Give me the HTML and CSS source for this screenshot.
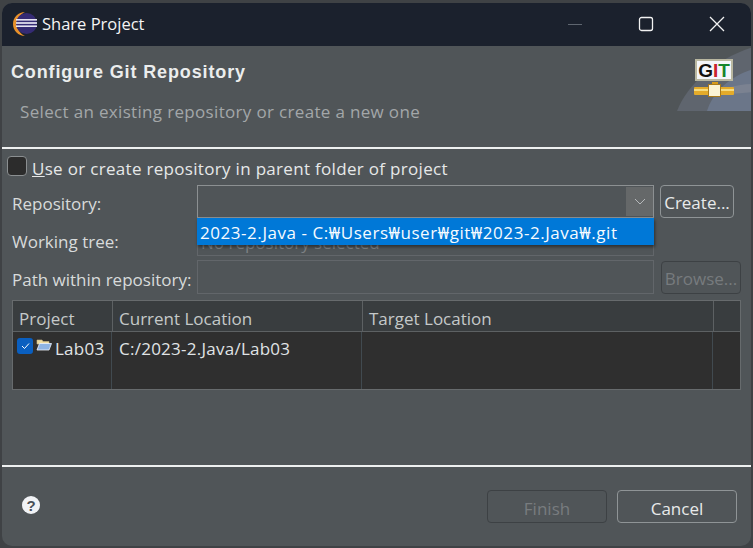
FILE: index.html
```html
<!DOCTYPE html>
<html lang="en">
<head>
<meta charset="utf-8">
<title>Share Project</title>
<link rel="stylesheet" href="styles.css">
</head>
<body>
<div class="window">
  <div class="titlebar">
    <svg class="app-icon" width="26" height="26" viewBox="0 0 26 26">
      <path d="M14 1C7.400 1 2 6.400 2 13C2 19.600 7.400 25 14 25C10 23 6 19 6 13C6 7 10 3 14 1Z" fill="#e8912a"/>
      <circle cx="15.500" cy="12.500" r="10.500" fill="#352b74"/>
      <rect x="5" y="8" width="21" height="1.600" fill="#e6e4f2"/>
      <rect x="5" y="11.200" width="21" height="1.600" fill="#f2f1f8"/>
      <rect x="5" y="14.400" width="21" height="1.600" fill="#e6e4f2"/>
    </svg>
    <span class="title">Share Project</span>
    <div class="controls">
      <svg width="16" height="16" viewBox="0 0 16 16"><path d="M1 8.500H15" stroke="#5f6670" stroke-width="1"/></svg>
      <svg width="16" height="16" viewBox="0 0 16 16"><rect x="1.500" y="1.500" width="13" height="13" rx="2" fill="none" stroke="#f2f2f2" stroke-width="1.300"/></svg>
      <svg width="16" height="16" viewBox="0 0 16 16"><path d="M1 1L15 15M15 1L1 15" stroke="#f2f2f2" stroke-width="1.300"/></svg>
    </div>
  </div>

  <header class="banner">
    <div class="banner-text">
      <h1>Configure Git Repository</h1>
      <p>Select an existing repository or create a new one</p>
    </div>
    <div class="banner-art">
      <svg width="76" height="65" viewBox="0 0 76 65">
        <path d="M0 65C10 38 40 12 76 1V65Z" fill="#5f656e"/>
        <path d="M30 65C36 45 54 30 76 23V65Z" fill="#6b7689"/>
        <path d="M30 50C45 42 62 38 76 38V46C60 48 45 48 30 50Z" fill="#858b96" opacity=".6"/>
        <rect x="19" y="14" width="36" height="20" fill="#f4f6fa" stroke="#b9b7a0" stroke-width="2"/>
        <rect x="17" y="41" width="40" height="8" rx="1" fill="#e4ab2a"/>
        <rect x="17" y="43" width="40" height="2" fill="#f6dc80"/>
        <rect x="35" y="36" width="6" height="4" fill="#d79b1c"/>
        <rect x="31.500" y="38.500" width="12" height="12" fill="#fbf3d4" stroke="#a8791a"/>
      </svg>
      <span class="git-mark"><span class="g">G</span><span class="i">I</span><span class="t">T</span></span>
    </div>
  </header>

  <main class="content">
    <label class="parent-check">
      <span class="checkbox"></span>
      <span class="check-text"><u>U</u>se or create repository in parent folder of project</span>
    </label>

    <div class="form">
      <span class="label">Repository:</span>
      <div class="combo">
        <span class="combo-arrow">
          <svg width="12" height="7" viewBox="0 0 12 7"><path d="M1 1L6 6L11 1" fill="none" stroke="#b5b8ba" stroke-width="1"/></svg>
        </span>
        <div class="dropdown">2023-2.Java - C:₩Users₩user₩git₩2023-2.Java₩.git</div>
      </div>
      <button class="btn btn-create">Create...</button>

      <span class="label">Working tree:</span>
      <div class="field field-tree"><span class="hidden-text">No repository selected</span></div>
      <span></span>

      <span class="label">Path within repository:</span>
      <div class="field field-path"></div>
      <button class="btn btn-browse" disabled>Browse...</button>
    </div>

    <div class="table">
      <div class="row head">
        <div class="cell">Project</div>
        <div class="cell">Current Location</div>
        <div class="cell">Target Location</div>
        <div class="cell"></div>
      </div>
      <div class="row body-row">
        <div class="cell project">
          <span class="tick">
            <svg width="9" height="8" viewBox="0 0 9 8"><path d="M1 4L3.500 6.500L8 1.500" fill="none" stroke="#fff" stroke-width="1"/></svg>
          </span>
          <svg class="folder" width="16" height="13" viewBox="0 0 16 13">
            <path d="M1 2H6L7 3.500H13V6H1Z" fill="#f0dca0" stroke="#c9b98a" stroke-width=".6"/>
            <path d="M1 12L3.500 5.500H15.500L13 12Z" fill="#8fb4e4" stroke="#eef3fb" stroke-width=".8"/>
          </svg>
          <span>Lab03</span>
        </div>
        <div class="cell">C:/2023-2.Java/Lab03</div>
        <div class="cell"></div>
        <div class="cell"></div>
      </div>
    </div>
  </main>

  <footer class="footer">
    <div class="actions">
      <svg class="help" width="20" height="20" viewBox="0 0 20 20">
        <circle cx="10" cy="10" r="9" fill="#f1f3f6"/>
        <text x="10" y="15.500" class="help-mark">?</text>
      </svg>
      <button class="btn btn-finish" disabled>Finish</button>
      <button class="btn btn-cancel">Cancel</button>
    </div>
  </footer>
</div>
</body>
</html>
```

FILE: styles.css
```css
* { box-sizing: border-box; }
html, body { margin: 0; padding: 0; }
body {
  width: 753px;
  height: 548px;
  overflow: hidden;
  background: #3f4245;
  font-family: "Open Sans", "Noto Sans", "Noto Sans CJK KR", sans-serif;
  font-size: 17px;
  color: #e6e8e8;
}
.window {
  margin: 3px 0 0 2px;
  width: 749px;
  height: 543px;
  background: #505558;
  border-radius: 10px;
  overflow: hidden;
  display: flex;
  flex-direction: column;
}
.titlebar {
  height: 43px;
  flex: none;
  background: #1b212d;
  display: flex;
  align-items: center;
  padding: 0 0 2px 9px;
}
.app-icon { margin-right: 5px; flex: none; }
.title { font-size: 16.500px; color: #f4f4f4; }
.controls {
  margin-left: auto;
  display: flex;
  gap: 55px;
  padding-right: 26px;
  align-items: center;
}
.banner {
  height: 103px;
  flex: none;
  display: flex;
  justify-content: space-between;
  align-items: flex-start;
  border-bottom: 2px solid #eef0f0;
}
.banner-text { padding: 14px 0 0 9px; }
.banner h1 {
  margin: 0;
  font-family: "Liberation Sans", sans-serif;
  font-size: 18px;
  font-weight: 700;
  line-height: 24px;
  letter-spacing: .87px;
  color: #ebeded;
}
.banner p {
  margin: 17px 0 0 9px;
  line-height: 22px;
  letter-spacing: .33px;
  color: #a3a7a9;
}
.banner-art { position: relative; width: 76px; height: 65px; flex: none; margin-right: -2px; }
.banner-art svg { display: block; }
.git-mark {
  position: absolute;
  left: 18px;
  top: 13px;
  width: 38px;
  text-align: center;
  font-family: "Liberation Sans", sans-serif;
  font-weight: 700;
  font-size: 19px;
  line-height: 24px;
  color: #111;
}
.git-mark .i { color: #c8232c; }
.git-mark .t { color: #14852c; }
.content {
  flex: 1;
  padding: 7px 10px 0 5px;
  position: relative;
}
.parent-check {
  display: flex;
  align-items: center;
  gap: 5px;
  height: 22px;
  letter-spacing: .31px;
}
.check-text { padding-top: 2px; }
.checkbox {
  width: 20px;
  height: 20px;
  flex: none;
  margin-top: -2px;
  background: #2c2c2c;
  border: 1px solid #8b8f91;
  border-radius: 4px;
}
.form {
  margin-top: 6px;
  padding-left: 5px;
  display: grid;
  grid-template-columns: 185px 457px auto;
  grid-template-rows: 34px 34px 34px;
  row-gap: 4px;
  align-items: center;
}
.label { color: #d8dbdb; padding-top: 5px; }
.combo {
  position: relative;
  height: 33px;
  background: #505558;
  border: 1px solid #8c9092;
}
.combo-arrow {
  position: absolute;
  right: 0;
  top: 1px;
  bottom: 1px;
  width: 27px;
  background: #656869;
  display: flex;
  align-items: center;
  justify-content: center;
}
.dropdown {
  position: absolute;
  left: -1px;
  right: -1px;
  top: 32px;
  height: 27px;
  padding-left: 3px;
  line-height: 30px;
  background: #0078d7;
  color: #f6fbff;
  letter-spacing: .55px;
  white-space: nowrap;
  box-shadow: 1px 2px 3px rgba(0,0,0,.45);
  z-index: 2;
}
.field {
  height: 33px;
  border: 1px solid #62666a;
  background: #505558;
  overflow: hidden;
}
.field-path { height: 34px; }
.hidden-text { display: block; padding-left: 3px; color: #7d8184; line-height: 37px; white-space: nowrap; }
.btn {
  font: inherit;
  height: 33px;
  background: #505558;
  border: 1px solid #8f9496;
  border-radius: 4px;
  color: #e8eaea;
  padding: 3px 0 0;
}
.btn-create { width: 74px; margin-left: 6px; }
.btn-browse { width: 80px; margin-left: 7px; color: #777b7e; border-color: #3d4144; }
.table {
  margin-top: 6px;
  margin-left: 5px;
  width: 729px;
  height: 90px;
  border: 1px solid #676b6d;
  background: #2f2f2f;
  display: flex;
  flex-direction: column;
}
.row {
  display: grid;
}
.head {
  grid-template-columns: 100px 250px 351px 1fr;
  height: 31px;
  background: #393d3f;
  border-bottom: 1px solid #5d6163;
  color: #c5c9c9;
}
.head .cell {
  padding: 5px 0 0 6px;
  line-height: 25px;
  border-right: 1px solid #5d6163;
}
.head .cell:last-child { border-right: 0; }
.body-row {
  grid-template-columns: 99px 250px 351px 1fr;
  flex: 1;
  line-height: 34px;
  color: #e0e4e6;
  letter-spacing: .25px;
}
.body-row .cell { padding-left: 7px; border-right: 1px solid #414a50; }
.body-row .cell:last-child { border-right: 0; }
.body-row .cell.project {
  padding-left: 4px;
  display: flex;
  align-items: flex-start;
  gap: 3px;
}
.tick {
  width: 16px;
  height: 16px;
  flex: none;
  margin-top: 6px;
  border-radius: 3px;
  background: #0a5fc0;
  display: flex;
  align-items: center;
  justify-content: center;
}
.folder { flex: none; margin-top: 6px; }
.footer { height: 81px; flex: none; border-top: 2px solid #eef0f0; }
.actions {
  display: flex;
  align-items: flex-start;
  padding: 23px 14px 0 19px;
}
.help { flex: none; margin-top: 5px; }
.help-mark {
  text-anchor: middle;
  font-family: "Liberation Sans", sans-serif;
  font-weight: 700;
  font-size: 15px;
  fill: #4a5058;
}
.btn-finish { width: 120px; margin-left: auto; color: #787c7f; border-color: #3d4144; }
.btn-cancel { width: 120px; margin-left: 10px; }
```
